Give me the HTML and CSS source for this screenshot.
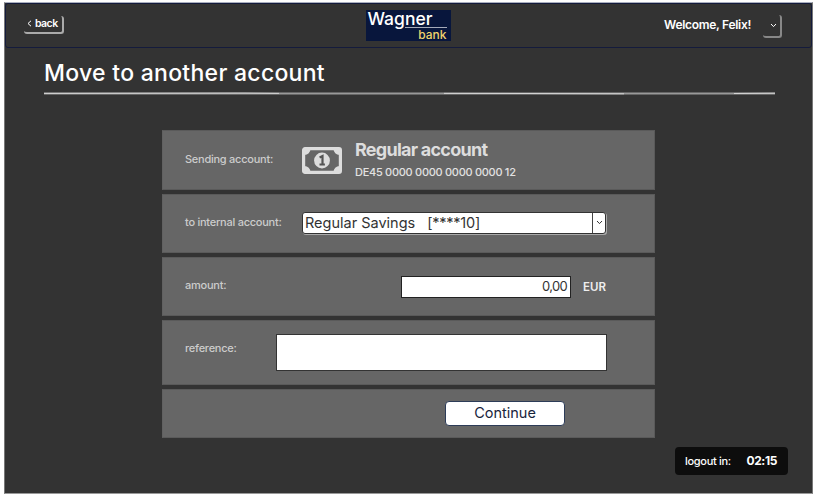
FILE: index.html
```html
<!DOCTYPE html>
<html lang="en">
<head>
<meta charset="utf-8">
<title>Wagner bank – Move to another account</title>
<link rel="stylesheet" href="styles.css">
</head>
<body>
<div class="window">
  <header class="topbar">
    <button class="back"><svg width="5" height="7" viewBox="0 0 5 7"><path d="M4 .8 1 3.500 4 6.200"/></svg><span>back</span></button>
    <div class="logo"><div class="logo-name">Wagner</div><div class="logo-sub">bank</div></div>
    <div class="user"><span class="welcome">Welcome, Felix!</span>
      <button class="menu" aria-label="Menu"><svg width="7" height="5" viewBox="0 0 7 5"><path d="M1 1l2.500 2.600L6 1"/></svg></button></div>
  </header>
  <main>
    <h1><span>Move to another account</span></h1>
    <svg class="rule" width="731" height="3" viewBox="0 0 731 3"><path class="rule-base" d="M0 1.500H731"/><path class="rule-light" d="M0 1.400L200 1.100 235 1.400M400 1.400L480 1.500 580 1.800M690 1.500L731 1.200"/></svg>
    <form class="rows">
      <section class="row sending">
        <span class="label l-send">Sending account:</span>
        <svg class="note" width="40" height="27" viewBox="0 0 40 27"><rect x="1.600" y="1.600" width="36.800" height="23.800" rx="1.400"/><path class="corners" d="M2 2h6.500a6 6 0 0 1-6 6H2zM38 2h-6.500a6 6 0 0 0 6 6h.5zM2 25h6.500a6 6 0 0 0-6-6H2zM38 25h-6.500a6 6 0 0 1 6-6h.5z"/><circle cx="20" cy="13.500" r="7.900"/><path class="one" d="M17.600 10.600l2.900-1.500v8.200M17.500 17.500h5.400"/></svg>
        <div class="account"><strong>Regular account</strong><span>DE45 0000 0000 0000 0000 12</span></div>
      </section>
      <section class="row internal">
        <span class="label l-int">to internal account:</span>
        <div class="select"><span class="sel-name">Regular Savings</span><span class="sel-no">[****10]</span><span class="arrow"><svg width="7" height="5" viewBox="0 0 7 5"><path d="M1 1l2.500 2.600L6 1"/></svg></span></div>
      </section>
      <section class="row amount">
        <span class="label l-am">amount:</span>
        <div class="amount-box"><span>0,00</span></div><span class="currency">EUR</span>
      </section>
      <section class="row reference">
        <span class="label l-ref">reference:</span>
        <div class="ref-box"></div>
      </section>
      <section class="row submit"><button class="continue" type="button"><span>Continue</span></button></section>
    </form>
  </main>
  <aside class="logout"><span class="logout-label">logout in:</span><strong>02:15</strong></aside>
</div>
</body>
</html>
```
FILE: styles.css
```css
* { box-sizing: border-box; }
body { margin: 0; width: 825px; height: 500px; overflow: hidden; background: #fff; font-family: Inter, "Liberation Sans", sans-serif; }
svg { display: block; fill: none; stroke: currentColor; }
button { padding: 0; border: 0; background: transparent; font: inherit; color: inherit; }
span, strong { white-space: nowrap; }
.window { position: relative; width: 809px; height: 492px; margin: 2px 0 0 4px; background: #333; border: 1px solid #777; border-top-color: #abb0bf; border-bottom-color: #999; color: #fff; }
.topbar { display: grid; grid-template-columns: 1fr 85px 1fr; height: 45px; border: 1px solid #141b3c; border-radius: 3px; padding: 0 29px 0 18px; }
.back { display: flex; align-items: center; gap: 3px; width: 40px; height: 18px; margin-top: 12px; padding: 0 0 1px 3px; border: solid #aaa; border-width: 0 2px 2px 0; border-radius: 3px; font-size: 10.500px; font-weight: 600; letter-spacing: -.55px; }
.logo { position: relative; left: 5px; width: 85px; height: 31px; margin-top: 6px; padding: 0 4px 0 2px; background: #08163c; }
.logo-name { height: 17px; font-size: 17.500px; line-height: 17px; font-weight: 500; letter-spacing: 0; }
.logo-sub { width: 42px; height: 14px; margin-left: auto; border-top: 1px solid #a5abba; color: #f1d36d; font-size: 12px; font-weight: 500; line-height: 13px; text-align: right; }
.user { display: flex; align-items: flex-start; justify-content: flex-end; gap: 12px; }
.welcome { margin-top: 13px; font-size: 12px; line-height: 16px; font-weight: 600; letter-spacing: -.3px; }
.menu { display: flex; justify-content: center; align-items: center; width: 19px; height: 23px; margin-top: 11px; padding: 0 0 1px 3px; border: solid #888; border-width: 0 2px 2px 0; border-radius: 3px; }
main { padding-left: 39px; }
h1 { margin: 10px 0 0; height: 30px; font-size: 23px; line-height: 30px; font-weight: 500; letter-spacing: .28px; }
.rule { margin-top: 4px; }
.rule-base { stroke: #999; stroke-width: 2; }
.rule-light { stroke: #d5d5d5; stroke-width: 1; }
.rows { display: grid; grid-template-rows: 60px 59px 59px 65px 49px; gap: 4px; width: 493px; margin: 35px 0 0 118px; }
.row { display: flex; align-items: center; padding: 0 47px 0 22px; background: #666; border: 1px solid #5a5a5a; border-left-color: #616161; color: #d8d8d8; }
.label { font-size: 11px; line-height: 16px; font-weight: 500; letter-spacing: -.25px; color: #ccc; padding-bottom: 3px; }
.l-send, .l-int { width: 117px; }
.note { stroke: #ddd; stroke-width: 3.200; color: #ddd; }
.note circle, .note .corners { fill: #ddd; stroke: none; }
.note .one { stroke: #555; stroke-width: 2.200; }
.account { display: flex; flex-direction: column; margin-left: 13px; }
.account strong { height: 24px; font-size: 18px; line-height: 24px; font-weight: 700; letter-spacing: -.75px; color: #ddd; }
.account span { height: 17px; margin-top: 2px; font-size: 11px; line-height: 17px; font-weight: 500; letter-spacing: -.28px; color: #e2e2e2; }
.sending { padding-bottom: 1px; }
.sending .label { padding-bottom: 2px; }
.sending .note { margin-top: 1px; }
.select { display: flex; align-items: center; width: 304px; height: 22px; margin-bottom: 2px; padding-left: 2px; background: #fff; border: 1px solid #333; border-radius: 3px; box-shadow: 1px 1px 0 #aaa; color: #333; font-size: 14.500px; }
.sel-no { margin-left: 12px; letter-spacing: -.25px; }
.arrow { display: flex; align-items: center; justify-content: center; align-self: stretch; width: 13px; margin-left: auto; border-left: 1px solid #444; }
.amount-box { width: 170px; height: 22px; margin-left: auto; padding-right: 3px; border: 1px solid #222; background: #fff; color: #333; text-align: right; font-size: 13px; line-height: 19px; letter-spacing: -.7px; }
.currency { width: 24px; margin-left: 12px; font-size: 11.500px; font-weight: 600; color: #eee; }
.ref-box { width: 331px; height: 37px; margin-left: auto; border: 1px solid #333; background: #fff; }
.reference .label { padding-bottom: 9px; }
.submit { justify-content: flex-end; padding-right: 89px; }
.continue { width: 120px; height: 25px; padding-bottom: 2px; border: 1px solid #2d3c58; border-radius: 4px; background: #fff; color: #17243c; font-size: 14.500px; }
.logout { position: absolute; right: 24px; bottom: 18px; display: flex; align-items: center; width: 113px; height: 28px; padding: 0 11px 1px 10px; border-radius: 4px; background: #0d0d0d; justify-content: space-between; }
.logout-label { font-size: 11px; font-weight: 500; letter-spacing: -.3px; }
.logout strong { font-size: 12px; font-weight: 700; letter-spacing: -.4px; }
```
